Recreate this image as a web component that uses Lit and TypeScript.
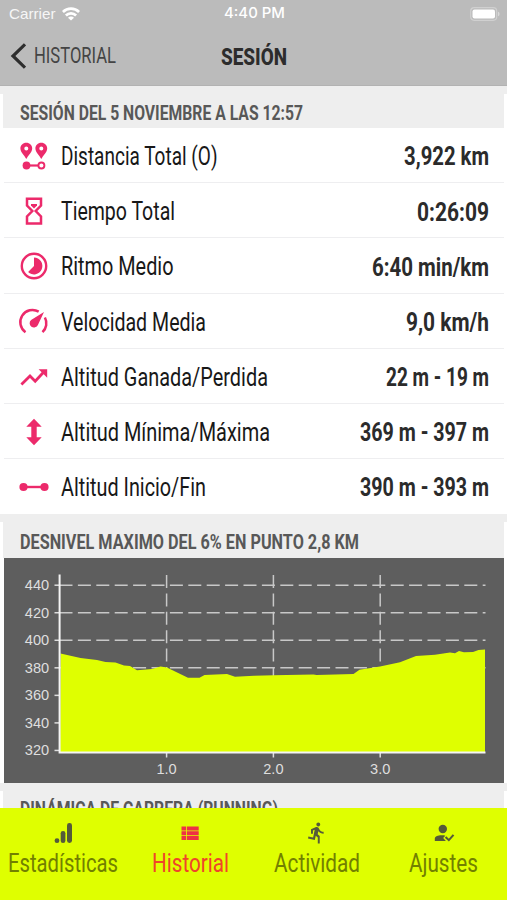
import { LitElement, html, css, svg } from "lit";
import { customElement, property } from "lit/decorators.js";

/** A single line of text set to a given width, standing in for a condensed face. */
@customElement("fit-text")
class FitText extends LitElement {
  @property() text = "";
  @property({ type: Number }) width = 100;
  @property({ type: Number }) size = 20;
  static styles = css`
    :host { display: block; flex: none; }
    svg { display: block; overflow: visible; }
    text { fill: currentColor; }
  `;
  render() {
    const h = this.size;
    return html`<svg width=${this.width} height=${h * 1.25}>
      <text x="0" y=${h * 0.98} font-size=${h} textLength=${this.width} lengthAdjust="spacingAndGlyphs">${this.text}</text>
    </svg>`;
  }
}

const icons: Record<string, unknown> = {
  distance: svg`<path fill-rule="evenodd" d="M6.300 .8c-3.400 0-5.900 2.500-5.900 5.700 0 3.700 4 6.900 5.900 10.500 1.900-3.600 5.900-6.800 5.900-10.500 0-3.200-2.500-5.700-5.900-5.700zM6.300 4.500a2 2 0 1 1 0 4 2 2 0 0 1 0-4zM21.300 .8c-3.400 0-5.900 2.500-5.900 5.700 0 3.700 4 6.900 5.900 10.500 1.900-3.600 5.900-6.800 5.900-10.500 0-3.200-2.500-5.700-5.900-5.700zM21.300 4.500a2 2 0 1 1 0 4 2 2 0 0 1 0-4z"/><circle cx="6.500" cy="23.500" r="3.900"/><path d="M9 22.400h10v2.200H9z"/><circle cx="21.400" cy="23.500" r="3" fill="none" stroke="currentColor" stroke-width="1.900"/>`,
  time: svg`<g fill="none" stroke="currentColor" stroke-width="2.500"><path d="M7 1.700h14v6.800L15.700 14l5.300 5.500v6.900H7v-6.900L12.300 14 7 8.500z"/></g><path d="M11 7h6v1.500l-3 3-3-3z"/>`,
  pace: svg`<circle cx="14" cy="14" r="12.200" fill="none" stroke="currentColor" stroke-width="2.400"/><path d="M14 5.600a8.400 8.400 0 1 1-5.900 14.400L14 14z"/>`,
  speed: svg`<g fill="none" stroke="currentColor" stroke-width="2.500"><path d="M5.500 24.200A12.200 12.200 0 0 1 18.700 3.700M24.900 9.500a12.200 12.200 0 0 1-2.400 14.700"/></g><path d="M24 3.900 17.900 16.900a4.300 4.300 0 1 1-6.800-4.900z"/>`,
  gain: svg`<path d="M1.400 21.500 10 13l5.200 5.200 8.800-9.400" fill="none" stroke="currentColor" stroke-width="2.800"/><path d="M18.600 6.300h8.600v8.500z"/>`,
  minmax: svg`<path d="m14 .700 7.700 8h-5v10.600h5L14 27.300l-7.700-8h5V8.700h-5z"/>`,
  ends: svg`<circle cx="3.500" cy="14" r="4.100"/><circle cx="24.500" cy="14" r="4.100"/><path d="M4 12.800h20v2.400H4z"/>`,
  stats: svg`<circle cx="3" cy="17.700" r="2.400"/><rect x="6.700" y="8" width="4.700" height="12" rx="2.300"/><rect x="13" y="0" width="5" height="20" rx="2.400"/>`,
  list: svg`<path d="M1.500 3.500H6v4H1.500zM6.800 3.500h11.900v4H6.800zM1.500 8.200H6v4H1.500zM6.800 8.200h11.900v4H6.800zM1.500 12.900H6v4H1.500zM6.800 12.900h11.900v4H6.800z"/>`,
  run: svg`<g transform="translate(-2.800 -1.900) scale(.97)"><path d="M13.490 5.480c1.100 0 2-.9 2-2s-.9-2-2-2-2 .9-2 2 .9 2 2 2zm-3.600 13.900l1-4.400 2.100 2v6h2v-7.500l-2.100-2 .6-3c1.300 1.500 3.300 2.500 5.500 2.500v-2c-1.900 0-3.500-1-4.300-2.400l-1-1.600c-.4-.6-1-1-1.700-1-.3 0-.5.1-.8.1l-5.200 2.200v4.700h2v-3.400l1.800-.7-1.600 8.100-4.900-1-.4 2 7 1.400z"/></g>`,
  user: svg`<circle cx="8.800" cy="6" r="4.200"/><path d="M.800 18v-2.400C1 13 5 12 8.500 12.300c1 0 2 .100 2.800.400L9.200 15l2.700 3zM10.800 14.700l1.500-1.400 2.500 2.400 3.900-4.400 1.600 1.300-5.400 6z"/>`,
};

@customElement("stat-row")
class StatRow extends LitElement {
  @property() icon = "";
  @property() label = "";
  @property() value = "";
  @property({ type: Number }) labelWidth = 0;
  @property({ type: Number }) valueWidth = 0;
  static styles = css`
    :host { display: flex; align-items: center; box-sizing: border-box; height: 55.2px; padding: 1.800px 15px 0 16px; border-bottom: 1px solid #eeeef0; font-family: Roboto, sans-serif; }
    .icon { width: 28px; height: 28px; flex: none; fill: currentColor; color: #ec2a6b; overflow: visible; }
    .label { margin-left: 12.800px; color: #181818; }
    .value { margin-left: auto; color: #2b2b2b; font-weight: 700; }
  `;
  render() {
    return html`
      <svg class="icon" viewBox="0 0 28 28">${icons[this.icon]}</svg>
      <fit-text class="label" .text=${this.label} .width=${this.labelWidth} .size=${25.5}></fit-text>
      <fit-text class="value" .text=${this.value} .width=${this.valueWidth} .size=${25}></fit-text>`;
  }
}

const profile = "56.5,95.5 76.500,100 93,102 101.500,104 111.500,104.500 120,107.500 126,108 133,112.300 148,111 156.500,108.500 163,109.500 168,112 184,119.700 195.500,119.700 200.500,117 223,116 231,118.700 250,117.700 269.500,117.200 309.500,116.500 312.500,117 349.500,116 355.500,111.700 376,108.500 396,104.300 412,98 431,96.700 446,94.500 451,95.300 455,93 460,94.300 469,94 474.500,92 481,91.500";

@customElement("elevation-chart")
class ElevationChart extends LitElement {
  static styles = css`
    :host { display: block; height: 225px; background: #5e5e5e; }
    svg { display: block; overflow: visible; }
    .grid { stroke: #c8c8c8; stroke-width: 1.500; stroke-dasharray: 13 5.400; fill: none; }
    .axis { stroke: #f4f4f4; stroke-width: 2; fill: none; }
    .tick { stroke: #dddddd; stroke-width: 1.500; }
    .area { fill: #dfff00; }
    text { fill: #dedede; font: 14.600px "Liberation Sans", Arial, sans-serif; }
  `;
  render() {
    const levels = [440, 420, 400, 380, 360, 340, 320];
    const kms = [1, 2, 3];
    const y = (v: number) => 27.2 + (440 - v) * 1.377;
    const x = (k: number) => 55.8 + k * 106.8;
    return html`<svg width="500" height="225">
      ${levels.slice(0, 4).map((v) => svg`<path class="grid" d="M55.500 ${y(v)}H481.500"/>`)}
      ${kms.map((k) => svg`<path class="grid" d="M${x(k)} 17V194"/>`)}
      <polygon class="area" points="56,194 ${profile} 481,194"></polygon>
      ${levels.map((v) => svg`<path class="tick" d="M50.500 ${y(v)}H56"/><text x="45.200" y=${y(v) + 4.8} text-anchor="end">${v}</text>`)}
      ${kms.map((k) => svg`<path class="tick" d="M${x(k)} 195v4.500"/><text x=${x(k)} y="215.800" text-anchor="middle">${k.toFixed(1)}</text>`)}
      <path class="axis" d="M55.600 16.500V194.600H481.500"></path>
    </svg>`;
  }
}

const rows = [
  ["distance", "Distancia Total (O)", 156.5, "3,922 km", 85],
  ["time", "Tiempo Total", 114, "0:26:09", 72],
  ["pace", "Ritmo Medio", 112.5, "6:40 min/km", 117],
  ["speed", "Velocidad Media", 145, "9,0 km/h", 83],
  ["gain", "Altitud Ganada/Perdida", 207, "22 m - 19 m", 103],
  ["minmax", "Altitud Mínima/Máxima", 209, "369 m - 397 m", 129],
  ["ends", "Altitud Inicio/Fin", 145, "390 m - 393 m", 129],
] as const;

const tabs = [
  ["stats", "Estadísticas", 110],
  ["list", "Historial", 77],
  ["run", "Actividad", 86],
  ["user", "Ajustes", 69],
] as const;

@customElement("app-root")
class AppRoot extends LitElement {
  static styles = css`
    :host { display: flex; flex-direction: column; height: 900px; overflow: hidden; background: #fff; font-family: Roboto, sans-serif; }
    .top { flex: none; height: 86px; background: #bbb; box-sizing: border-box; border-bottom: 1px solid #b2b2b2; }
    .status, .nav { display: grid; grid-template-columns: 1fr auto 1fr; align-items: center; }
    .status { height: 27px; padding: 0 7px 0 9px; color: #fff; font-family: "Liberation Sans", Arial, sans-serif; }
    .carrier { display: flex; align-items: center; gap: 6px; color: #f6f6f6; }
    .clock { font-family: Inter, sans-serif; font-weight: 500; }
    .battery { justify-self: end; }
    .nav { height: 57px; padding: 0 0 0 10px; color: #2c2c2c; }
    .nav { padding-right: 10px; }
    .back { display: flex; align-items: center; gap: 8px; color: #444; }
    .title { font-weight: 800; }
    .content { flex: 1; min-height: 0; overflow: hidden; }
    .section { height: 42px; background: #eee; box-sizing: border-box; padding: 13.800px 0 0 17px; color: #585858; font-weight: 700; border: solid #fff; border-width: 0 3px; border-image: linear-gradient(to bottom, #eee 9px, #fff 9px) 1; }
    .section.mid { height: 43.500px; padding-top: 14.300px; }
    .section.last { padding-top: 13px; }
    .card { margin: 0 3px 0 4px; }
    .chart { margin: 0 3px 0 3.500px; }
    stat-row:last-child { border-color: transparent; }
    .tabs { flex: none; display: grid; grid-template-columns: repeat(4, 1fr); height: 92px; background: #dfff00; }
    .tab { display: flex; flex-direction: column; align-items: center; padding-top: 15px; gap: 4.300px; }
    .tab svg { width: 20px; height: 20px; margin-left: 1.500px; overflow: visible; fill: #555a3a; }
    .tab fit-text { color: #728000; }
    .tab.on svg { fill: #ee3145; margin-left: 0; }
    .tab.on fit-text { color: #f0442a; }
  `;
  render() {
    return html`
      <header class="top">
        <div class="status">
          <div class="carrier">
            <fit-text .text=${"Carrier"} .width=${46.5} .size=${14.8}></fit-text>
            <svg width="18" height="14" viewBox="0 0 18 14" fill="none" stroke="#fff" stroke-width="2.700"><path d="M.900 5a11.500 11.500 0 0 1 16.200 0M3.900 8.500a7.200 7.200 0 0 1 10.200 0"/><path d="M9 13.500 6 10.800a4 4 0 0 1 6 0z" fill="#fff" stroke="none"/></svg>
          </div>
          <fit-text class="clock" .text=${"4:40 PM"} .width=${61} .size=${14.6}></fit-text>
          <svg class="battery" width="30" height="14" viewBox="0 0 30 14"><rect x=".700" y=".700" width="26" height="12.600" rx="3.500" fill="none" stroke="#d0d0d0" stroke-width="1.200"/><rect x="2.500" y="2.500" width="22.500" height="9" rx="2" fill="#fff"/><path d="M28 4.700c2 .5 2 4.100 0 4.600z" fill="#d8d8d8"/></svg>
        </div>
        <div class="nav">
          <div class="back">
            <svg width="16" height="26" viewBox="0 0 16 26" fill="none" stroke="#2d2d2d" stroke-width="3.200"><path d="M15 1.300 3 13l12 11.700"/></svg>
            <fit-text .text=${"HISTORIAL"} .width=${82} .size=${21.7}></fit-text>
          </div>
          <fit-text class="title" .text=${"SESIÓN"} .width=${66} .size=${24}></fit-text>
          <span></span>
        </div>
      </header>
      <main class="content">
        <div class="section"><fit-text .text=${"SESIÓN DEL 5 NOVIEMBRE A LAS 12:57"} .width=${283} .size=${20}></fit-text></div>
        <div class="card">
          ${rows.map(([icon, label, lw, value, vw]) => html`<stat-row .icon=${icon} .label=${label} .labelWidth=${lw} .value=${value} .valueWidth=${vw}></stat-row>`)}
        </div>
        <div class="section mid"><fit-text .text=${"DESNIVEL MAXIMO DEL 6% EN PUNTO 2,8 KM"} .width=${339} .size=${20}></fit-text></div>
        <elevation-chart class="chart"></elevation-chart>
        <div class="section last"><fit-text .text=${"DINÁMICA DE CARRERA (RUNNING)"} .width=${258} .size=${20}></fit-text></div>
      </main>
      <nav class="tabs">
        ${tabs.map(([icon, label, w], i) => html`<div class="tab ${i === 1 ? "on" : ""}"><svg viewBox="0 0 20 20">${icons[icon]}</svg><fit-text .text=${label} .width=${w} .size=${26}></fit-text></div>`)}
      </nav>`;
  }
}
